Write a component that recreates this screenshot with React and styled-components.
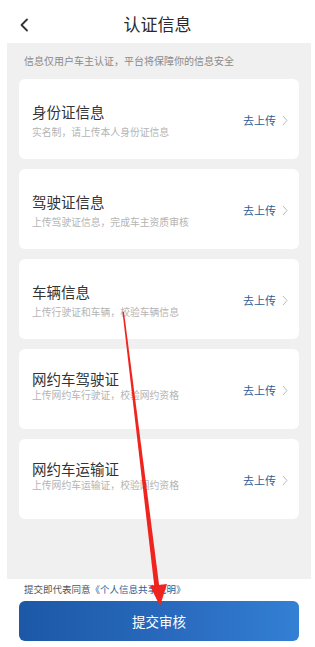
import styled, { createGlobalStyle } from 'styled-components'

const GlobalStyle = createGlobalStyle`
    html, body {
        margin: 0;
        padding: 0;
        background: #fff;
    }
    body {
        font-family: "Noto Sans CJK SC", "Noto Sans", sans-serif;
    }
`

const items = [
    { title: '身份证信息', desc: '实名制，请上传本人身份证信息' },
    { title: '驾驶证信息', desc: '上传驾驶证信息，完成车主资质审核' },
    { title: '车辆信息', desc: '上传行驶证和车辆，校验车辆信息' },
    { title: '网约车驾驶证', desc: '上传网约车行驶证，校验网约资格', tight: true },
    { title: '网约车运输证', desc: '上传网约车运输证，校验网约资格', tight: true },
]

function App () {
    return (
        <Page>
            <GlobalStyle />
            <Header>
                <BackButton>
                    <svg width="10" height="14" viewBox="0 0 10 14">
                        <path d="M8 1.5 L2.5 7 L8 12.5" fill="none" stroke="#333" strokeWidth="1.8" strokeLinecap="round" strokeLinejoin="round" />
                    </svg>
                </BackButton>
                <Title>认证信息</Title>
            </Header>
            <Panel>
                <Notice>信息仅用户车主认证，平台将保障你的信息安全</Notice>
                <CardList>
                    {items.map(item => (
                        <Card key={item.title}>
                            <CardText $tight={item.tight}>
                                <CardTitle $tight={item.tight}>{item.title}</CardTitle>
                                <CardDesc $tight={item.tight}>{item.desc}</CardDesc>
                            </CardText>
                            <UploadLink>
                                去上传
                                <svg width="6" height="11" viewBox="0 0 6 11">
                                    <path d="M1 1 L5 5.5 L1 10" fill="none" stroke="#bbb" strokeWidth="1" />
                                </svg>
                            </UploadLink>
                        </Card>
                    ))}
                </CardList>
            </Panel>
            <Footer>
                <Agreement>提交即代表同意<a>《个人信息共享说明》</a></Agreement>
                <SubmitButton>提交审核</SubmitButton>
            </Footer>
            <Arrow width="315" height="647" viewBox="0 0 315 647">
                <polygon points="122.5,312 124,312 159.5,588 154.5,588" fill="#f0241e" />
                <polygon points="150,586 167,584 160,606" fill="#f0241e" />
            </Arrow>
        </Page>
    )
}

const Page = styled.div`
    position: relative;
    width: 315px;
    height: 647px;
    overflow: hidden;
    background: #fff;
`

const Header = styled.div`
    position: relative;
    display: flex;
    align-items: center;
    justify-content: center;
    height: 43px;
    padding-top: 4px;
    box-sizing: border-box;
`

const BackButton = styled.div`
    position: absolute;
    left: 19px;
    top: 18px;
    display: flex;
`

const Title = styled.div`
    font-size: 17px;
    color: #2a2a2a;
    line-height: 24px;
`

const Panel = styled.div`
    margin: 0 4px 0 7px;
    height: 536px;
    background: #f0f0f0;
    display: flex;
    flex-direction: column;
`

const Notice = styled.div`
    height: 36px;
    line-height: 36px;
    padding-left: 17px;
    font-size: 10px;
    color: #8a8a8a;
`

const CardList = styled.div`
    display: flex;
    flex-direction: column;
    gap: 10px;
    padding: 0 12px;
`

const Card = styled.div`
    display: flex;
    justify-content: space-between;
    align-items: center;
    height: 80px;
    box-sizing: border-box;
    padding: 0 11px 0 13px;
    background: #fff;
    border-radius: 6px;
`

const CardText = styled.div`
    align-self: flex-start;
    display: flex;
    flex-direction: column;
    padding-top: ${p => p.$tight ? '21px' : '23px'};
`

const CardTitle = styled.div`
    font-size: 14.5px;
    line-height: ${p => p.$tight ? '18px' : '20px'};
    color: #333;
`

const CardDesc = styled.div`
    margin-top: ${p => p.$tight ? '0' : '3px'};
    font-size: 9.8px;
    line-height: 14px;
    color: #b4b4b4;
`

const UploadLink = styled.div`
    display: flex;
    align-items: center;
    gap: 6px;
    padding-top: 2px;
    font-size: 11px;
    line-height: 16px;
    color: #2d5e96;
`

const Footer = styled.div`
    display: flex;
    flex-direction: column;
    padding: 0 16px 0 19px;
`

const Agreement = styled.div`
    height: 22px;
    line-height: 20px;
    padding-left: 5px;
    font-size: 9.5px;
    color: #555;

    a {
        color: #2d5e96;
    }
`

const SubmitButton = styled.div`
    height: 40px;
    border-radius: 6px;
    background: linear-gradient(90deg, #1c58a6 0%, #2a6cc0 60%, #3380d4 100%);
    color: #fff;
    font-size: 13.5px;
    display: flex;
    align-items: center;
    justify-content: center;
`

const Arrow = styled.svg`
    position: absolute;
    left: 0;
    top: 0;
    pointer-events: none;
`

export default App
